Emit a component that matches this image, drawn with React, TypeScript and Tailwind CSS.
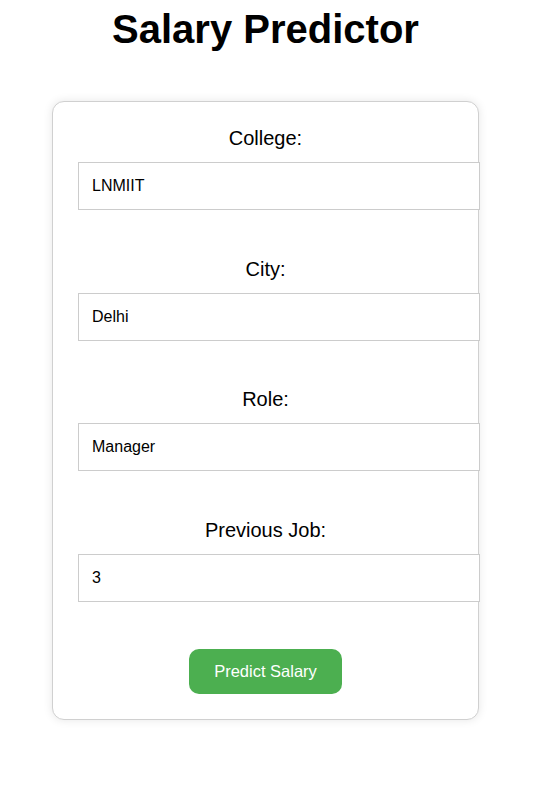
import React from "react";

const fields = [
  { label: "College:", value: "LNMIIT" },
  { label: "City:", value: "Delhi" },
  { label: "Role:", value: "Manager" },
  { label: "Previous Job:", value: "3" },
];

export default function App() {
  return (
    <div
      className="min-h-[808px] w-[531px] bg-white text-black"
      style={{ fontFamily: '"Liberation Sans", Arial, sans-serif' }}
    >
      <h1 className="pt-[6px] text-center text-[40px] font-bold leading-[46px]">Salary Predictor</h1>
      <div className="mx-auto mt-[49px] flex w-[427px] flex-col rounded-[12px] border border-[#d0d0d0] bg-white px-[25px] pt-[25px] pb-[25px] shadow-[0_0_10px_rgba(0,0,0,0.1)]">
        {fields.map((f, i) => (
          <div key={f.label} className={i > 0 ? "mt-[47.67px]" : ""}>
            <div className="mb-[12px] text-center text-[20px] leading-[23px]">{f.label}</div>
            <input
              readOnly
              value={f.value}
              className="box-border h-[48px] w-[402px] border border-[#cccccc] bg-white px-[13px] text-[16px] text-black outline-none"
            />
          </div>
        ))}
        <div className="mt-[47px] flex justify-center">
          <button className="h-[45px] w-[153px] rounded-[10px] bg-[#4caf50] text-[16.5px] text-white">
            Predict Salary
          </button>
        </div>
      </div>
    </div>
  );
}
